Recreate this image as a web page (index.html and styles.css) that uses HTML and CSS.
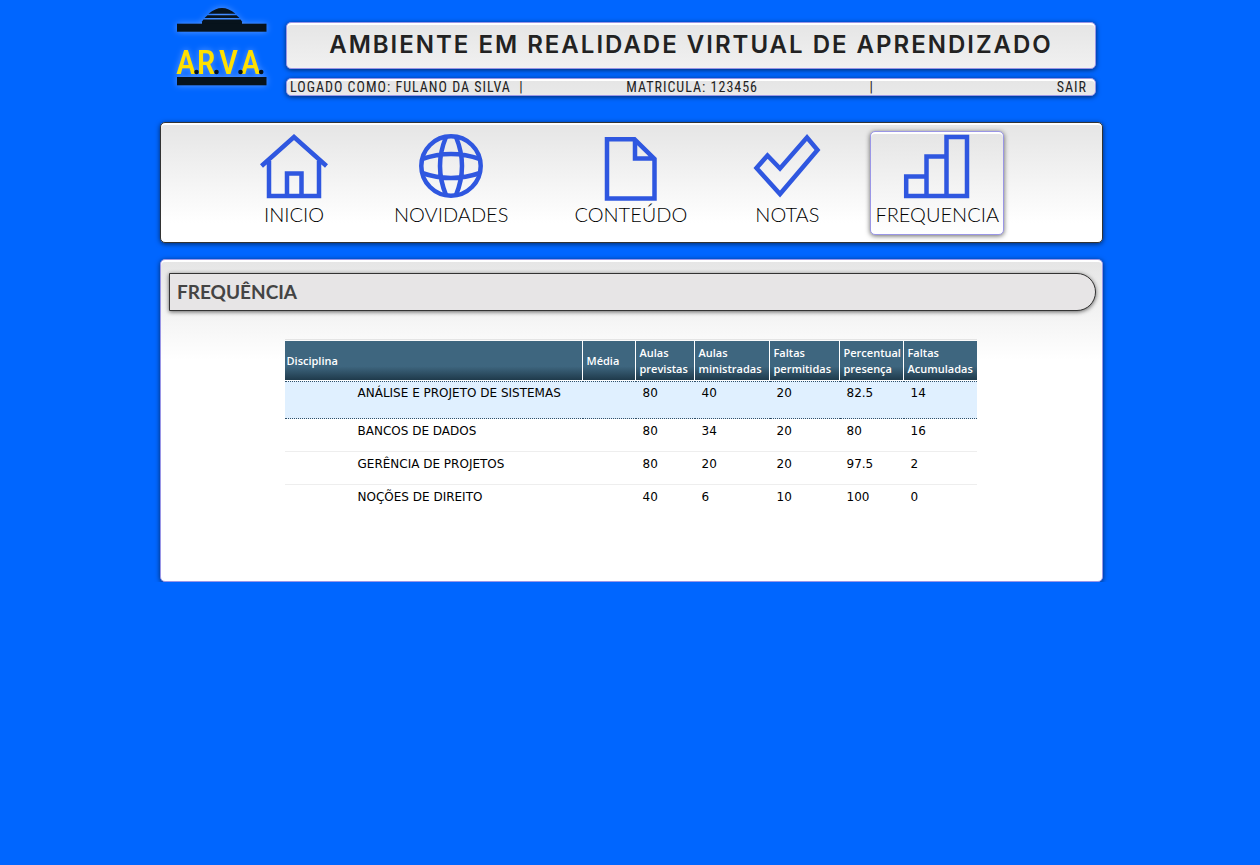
FILE: index.html
```
<!DOCTYPE html>
<html lang="pt-BR">
<head>
<meta charset="utf-8">
<title>A.R.V.A. - Frequência</title>
<link rel="stylesheet" href="styles.css">
</head>
<body>
<div class="page">
  <header class="header">
    <svg class="logo" viewBox="0 0 98 88" role="img" aria-label="A.R.V.A.">
      <g class="logo-letters">
        <text x="13" y="67">A</text>
        <text x="33" y="67">R</text>
        <text x="55.500" y="67">V</text>
        <text x="77.500" y="67">A</text>
      </g>
      <g fill="#07131c">
        <path d="M35.500 6.800Q49 -5 62.500 6.800Z"/>
        <path d="M31.500 11L34.500 8.300H63.500L66.500 11Z"/>
        <path d="M29 17V14.500L30.500 12.500H67.500L69 14.500V17Z"/>
        <rect x="4" y="16.700" width="89.500" height="8"/>
        <rect x="4" y="70" width="89.500" height="8.300"/>
        <circle cx="23.500" cy="65" r="2.300"/>
        <circle cx="43.500" cy="65" r="2.300"/>
        <circle cx="67.500" cy="65" r="2.300"/>
        <circle cx="88.200" cy="65" r="2.300"/>
      </g>
    </svg>
    <div class="header-bars">
      <h1 class="panel site-title">AMBIENTE EM REALIDADE VIRTUAL DE APRENDIZADO</h1>
      <div class="panel user-bar">
        <span>LOGADO COMO: FULANO DA SILVA <span class="bar">|</span></span>
        <span>MATRICULA: 123456</span>
        <span>|</span>
        <a href="#sair">SAIR</a>
      </div>
    </div>
  </header>

  <nav class="panel nav">
    <a class="nav-item" href="#inicio">
      <svg class="icon" viewBox="0 0 68 68"><path d="M1.500 32L34 3L66.500 32M9 27V62H59V27M27 62V39.500H41.500V62"/></svg>
      <span>INICIO</span>
    </a>
    <a class="nav-item" href="#novidades">
      <svg class="icon" viewBox="0 0 68 68"><circle cx="34" cy="32" r="29.700"/><path d="M29 3Q17 32 29 61M39 3Q51 32 39 61M5 25Q34 15 63 25M5 39Q34 49 63 39"/></svg>
      <span>NOVIDADES</span>
    </a>
    <a class="nav-item" href="#conteudo">
      <svg class="icon" viewBox="0 0 68 68"><path d="M10 5.300H37.500L57.500 25V64.500H10ZM38 5.300V24.500H57.500"/></svg>
      <span>CONTEÚDO</span>
    </a>
    <a class="nav-item" href="#notas">
      <svg class="icon" viewBox="0 0 68 68"><path d="M3.500 34L14.500 21.500L27 34.500L54 3.500L64.500 16L27 60Z"/></svg>
      <span>NOTAS</span>
    </a>
    <a class="nav-item panel active" href="#frequencia" aria-current="page">
      <svg class="icon" viewBox="0 0 68 68"><path d="M3.200 62V42.500H23.500V22.500H43.500V3H64V62ZM23.500 42.500V62M43.500 22.500V62"/></svg>
      <span>FREQUENCIA</span>
    </a>
  </nav>

  <main class="panel content">
    <h2 class="section-title">FREQUÊNCIA</h2>
    <div class="grades-area">
      <table class="grades">
        <colgroup>
          <col class="c-name"><col class="c-avg"><col class="c-planned"><col class="c-given"><col class="c-allowed"><col class="c-percent"><col class="c-total">
        </colgroup>
        <thead>
          <tr><th scope="col">Disciplina</th><th scope="col">Média</th><th scope="col">Aulas<br>previstas</th><th scope="col">Aulas<br>ministradas</th><th scope="col">Faltas<br>permitidas</th><th scope="col">Percentual<br>presença</th><th scope="col">Faltas<br>Acumuladas</th></tr>
        </thead>
        <tbody>
          <tr class="selected"><td>ANÁLISE E PROJETO DE SISTEMAS</td><td></td><td>80</td><td>40</td><td>20</td><td>82.5</td><td>14</td></tr>
          <tr><td>BANCOS DE DADOS</td><td></td><td>80</td><td>34</td><td>20</td><td>80</td><td>16</td></tr>
          <tr><td>GERÊNCIA DE PROJETOS</td><td></td><td>80</td><td>20</td><td>20</td><td>97.5</td><td>2</td></tr>
          <tr><td>NOÇÕES DE DIREITO</td><td></td><td>40</td><td>6</td><td>10</td><td>100</td><td>0</td></tr>
        </tbody>
      </table>
    </div>
  </main>
</div>
</body>
</html>
```
FILE: styles.css
```
* { box-sizing: border-box; }

body {
  margin: 0;
  padding: 7px 0 0 3px;
  background: #0066ff;
  color: #222;
  font-family: Lato, "Open Sans", sans-serif;
}

.page {
  max-width: 943px;
  margin: 0 auto;
}

.panel {
  border: 1px solid #9a96e6;
  border-radius: 5px;
  background: linear-gradient(#e5e5e5, #fff 100px) #fff;
  box-shadow: inset 0 2px 0 #fff, 0 1px 5px rgba(0, 0, 0, 0.6);
}

.header {
  display: flex;
  gap: 15px;
  padding: 0 7px 0 13px;
}

.logo {
  flex: none;
  width: 98px;
  height: 88px;
  filter: drop-shadow(0 0 3px rgba(120, 170, 255, 0.8));
}

.logo-letters {
  fill: #ffe000;
  font-family: "Roboto Condensed", "Liberation Sans Narrow", sans-serif;
  font-size: 34px;
  font-weight: 500;
  text-anchor: middle;
}

.header-bars {
  flex: 1;
  padding-top: 15px;
}

.site-title {
  margin: 0 0 9px;
  font: 600 24px/44px Inter, sans-serif;
  padding-bottom: 1px;
  letter-spacing: 2px;
  text-align: center;
}

.user-bar {
  display: grid;
  grid-template-columns: 336fr 243fr 187fr auto;
  padding: 0 8px 0 3px;
  font: 14px/16px "Roboto Condensed", "Liberation Sans Narrow", sans-serif;
  letter-spacing: 1px;
}

.bar { margin-left: 4px; }

.user-bar a,
.nav-item {
  color: inherit;
  text-decoration: none;
}

.nav {
  display: flex;
  justify-content: center;
  gap: 32px;
  margin-top: 26px;
  padding: 8px 16px 7px 0;
  border-color: #333;
}

.nav-item {
  display: flex;
  flex-direction: column;
  align-items: center;
  padding: 2px 16px 8px;
  border: 1px solid transparent;
  font-size: 20px;
  font-weight: 300;
  line-height: 24px;
}

.nav .active {
  padding: 2px 4px 8px;
  border-color: #9a96e6;
}

.nav .nav-item { color: #000; }

.icon {
  width: 68px;
  height: 68px;
  fill: none;
  stroke: #2f57e0;
  stroke-width: 4.5;
}

.content {
  margin-top: 16px;
  padding: 13px 6px 63px 8px;
}

.section-title {
  margin: 0 0 28px;
  padding-left: 7px;
  border: 1px solid #333;
  border-radius: 0 19px 19px 0;
  background: #e7e5e6;
  box-shadow: 0 1px 4px rgba(0, 0, 0, 0.6);
  color: #444;
  font-size: 19px;
  font-weight: bold;
  line-height: 36px;
}

.grades-area { padding-right: 4px; }

.grades {
  width: 692px;
  max-width: 100%;
  margin: 0 auto;
  padding-top: 1px;
  border-top: 1px solid #e4e4e4;
  border-spacing: 0;
  table-layout: fixed;
  color: #000;
  font: 12px/14px "DejaVu Sans", sans-serif;
}

.c-name { width: 298px; }
.c-avg { width: 53px; }
.c-planned { width: 59px; }
.c-given { width: 75px; }
.c-allowed { width: 70px; }
.c-percent { width: 64px; }
.c-total { width: 73px; }

.grades th {
  height: 40px;
  padding: 3px 0 3px 4px;
  border-right: 1px solid #fff;
  border-bottom: 1px solid #fff;
  background: linear-gradient(#3e667f 65%, #1f3a4b);
  color: #fff;
  font: 600 11px/16px "Open Sans", sans-serif;
  text-align: left;
}

.grades th:first-child { padding-left: 2px; }
.grades th:last-child { border-right: 0; }

.grades td {
  height: 33px;
  padding: 5px 0 0 7px;
  border-bottom: 1px solid #eee;
  vertical-align: top;
}

.grades td:first-child { padding-left: 73px; }
.grades tr:last-child td { border-bottom: 0; }

.grades .selected td {
  height: 38px;
  padding-top: 4px;
  background: #e0f0ff;
  border-top: 1px dotted #2f4f68;
  border-bottom: 1px dotted #2f4f68;
}
```
